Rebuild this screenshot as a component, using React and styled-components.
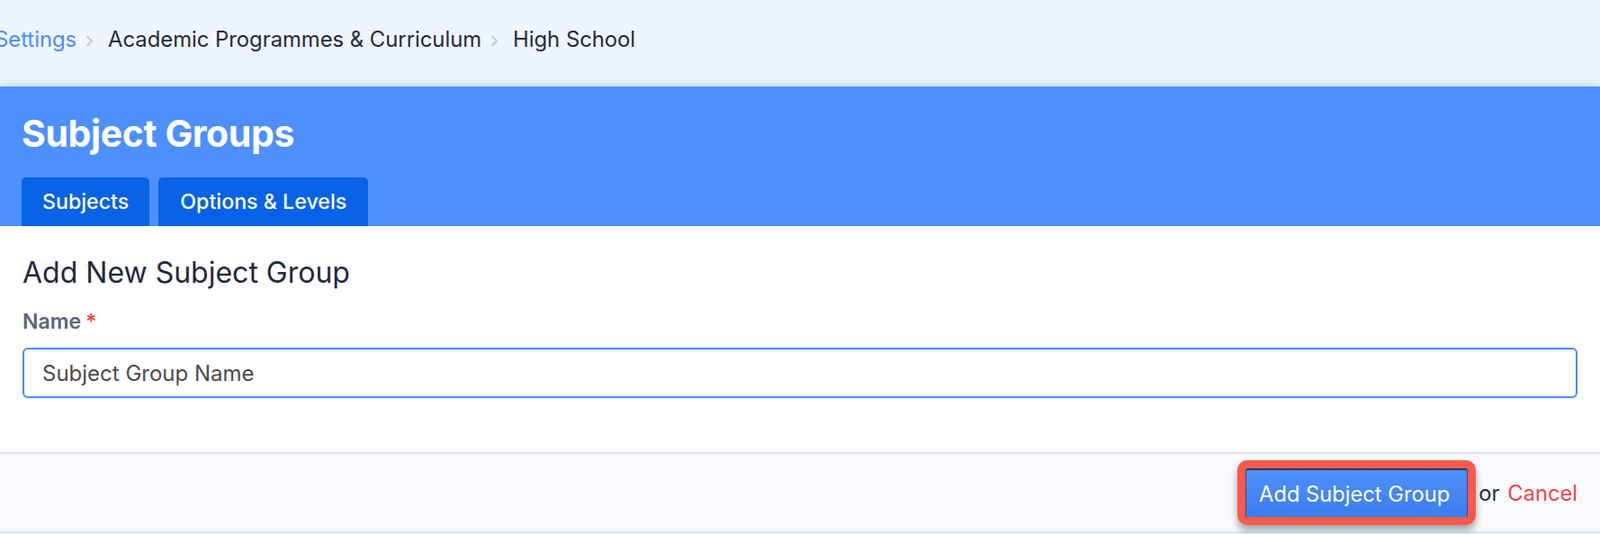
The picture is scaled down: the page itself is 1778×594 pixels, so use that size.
import styled, { createGlobalStyle } from "styled-components";

const GlobalStyle = createGlobalStyle`
  html, body {
    margin: 0;
    padding: 0;
    background: #ffffff;
    font-family: Inter, "Noto Sans", sans-serif;
    overflow: hidden;
  }
  * { box-sizing: border-box; }
`;

const Chevron = () => (
  <svg width="9" height="13" viewBox="0 0 9 13" fill="none">
    <path d="M2 1.5L7 6.5L2 11.5" stroke="#c9cacc" strokeWidth="2" strokeLinecap="round" strokeLinejoin="round" />
  </svg>
);

const App = () => {
  const crumbs = ["Settings", "Academic Programmes & Curriculum", "High School"];
  return (
    <Page>
      <GlobalStyle />
      <Breadcrumbs>
        <CrumbList>
          {crumbs.map((c, i) => (
            <Crumb key={c}>
              {i === 0 ? <CrumbLink href="#">{c}</CrumbLink> : <span>{c}</span>}
              {i < crumbs.length - 1 && (
                <Sep>
                  <Chevron />
                </Sep>
              )}
            </Crumb>
          ))}
        </CrumbList>
      </Breadcrumbs>

      <Header>
        <Title>Subject Groups</Title>
        <Tabs>
          <Tab>Subjects</Tab>
          <Tab $wide>Options &amp; Levels</Tab>
        </Tabs>
      </Header>

      <Form>
        <FormBody>
          <Heading>Add New Subject Group</Heading>
          <Label>
            Name<Required>*</Required>
          </Label>
          <Input placeholder="Subject Group Name" />
        </FormBody>
        <Footer>
          <Highlight>
            <SubmitButton type="button">Add Subject Group</SubmitButton>
          </Highlight>
          <Or>or</Or>
          <CancelLink href="#">Cancel</CancelLink>
        </Footer>
      </Form>
    </Page>
  );
};

export default App;

const Page = styled.div`
  width: 1778px;
  height: 594px;
  display: flex;
  flex-direction: column;
  background: #ffffff;
`;

const Breadcrumbs = styled.nav`
  height: 96px;
  padding-top: 30px;
  background: #eef5ff;
`;

const CrumbList = styled.ol`
  display: flex;
  margin: 0 0 0 -6px;
  padding: 0;
  list-style: none;
  font-size: 23.8px;
  line-height: 1.2;
  color: #252b3b;
`;

const Crumb = styled.li`
  display: flex;
  align-items: center;
`;

const CrumbLink = styled.a`
  color: #4a8ef8;
  text-decoration: none;
`;

const Sep = styled.span`
  display: inline-flex;
  margin: 2px 16px 0 10px;
`;

const Header = styled.header`
  background: #4d8ffb;
  padding: 28px 24px 0;
  box-shadow: 0 -3px 7px rgba(30, 50, 90, 0.12);
`;

const Title = styled.h1`
  margin: 0 0 24px;
  font-size: 41px;
  line-height: 1.2;
  font-weight: 700;
  color: #ffffff;
  letter-spacing: -0.4px;
`;

const Tabs = styled.div`
  display: flex;
  gap: 10px;
`;

const Tab = styled.button`
  height: 54px;
  padding: 0 ${(p) => (p.$wide ? "24px" : "23px")};
  border: none;
  border-radius: 5px 5px 0 0;
  background: #0762e8;
  color: #ffffff;
  font-family: inherit;
  font-size: 23.2px;
  font-weight: 500;
  cursor: pointer;
`;

const Form = styled.section`
  flex: 1;
  display: flex;
  flex-direction: column;
`;

const FormBody = styled.div`
  padding: 33px 25px 60px;
`;

const Heading = styled.h2`
  margin: 0 0 21px;
  font-size: 32px;
  line-height: 1.2;
  font-weight: 400;
  color: #1f2a3d;
`;

const Label = styled.label`
  display: block;
  margin-bottom: 15px;
  font-size: 23px;
  line-height: 1.2;
  font-weight: 600;
  color: #56667f;
`;

const Required = styled.span`
  color: #f2453d;
  margin-left: 5px;
`;

const Input = styled.input`
  display: block;
  width: 100%;
  height: 56px;
  padding: 0 20px;
  border: 2px solid #4b8cf6;
  border-radius: 6px;
  box-shadow: inset 0 2px 3px rgba(0, 0, 0, 0.05);
  font-family: inherit;
  font-size: 24px;
  color: #333;
  outline: none;
  &::placeholder {
    color: #4b4b4b;
  }
`;

const Footer = styled.footer`
  height: 90px;
  display: flex;
  align-items: center;
  justify-content: flex-end;
  padding: 0 25px 0 0;
  background: #f8fafe;
  border-top: 2px solid #d7e3f5;
  border-bottom: 2px solid #d7e3f5;
  font-size: 23.7px;
`;

const Highlight = styled.span`
  display: inline-flex;
  border: 9px solid #f8594d;
  border-radius: 11px;
  box-shadow: 0 6px 9px rgba(0, 0, 0, 0.35);
`;

const SubmitButton = styled.button`
  height: 54px;
  padding: 0 20px 0 15px;
  border: none;
  border-top: 2px solid #25395e;
  border-radius: 2px;
  background: linear-gradient(#4f90fa, #3a7dee);
  box-shadow: inset 1px 0 0 #2f4f86, inset -1px 0 0 #2f4f86;
  color: #ffffff;
  font-family: inherit;
  font-size: 23.7px;
  cursor: pointer;
`;

const Or = styled.span`
  margin: 0 9px 0 3px;
  color: #252b3b;
`;

const CancelLink = styled.a`
  color: #f24747;
  text-decoration: none;
`;
